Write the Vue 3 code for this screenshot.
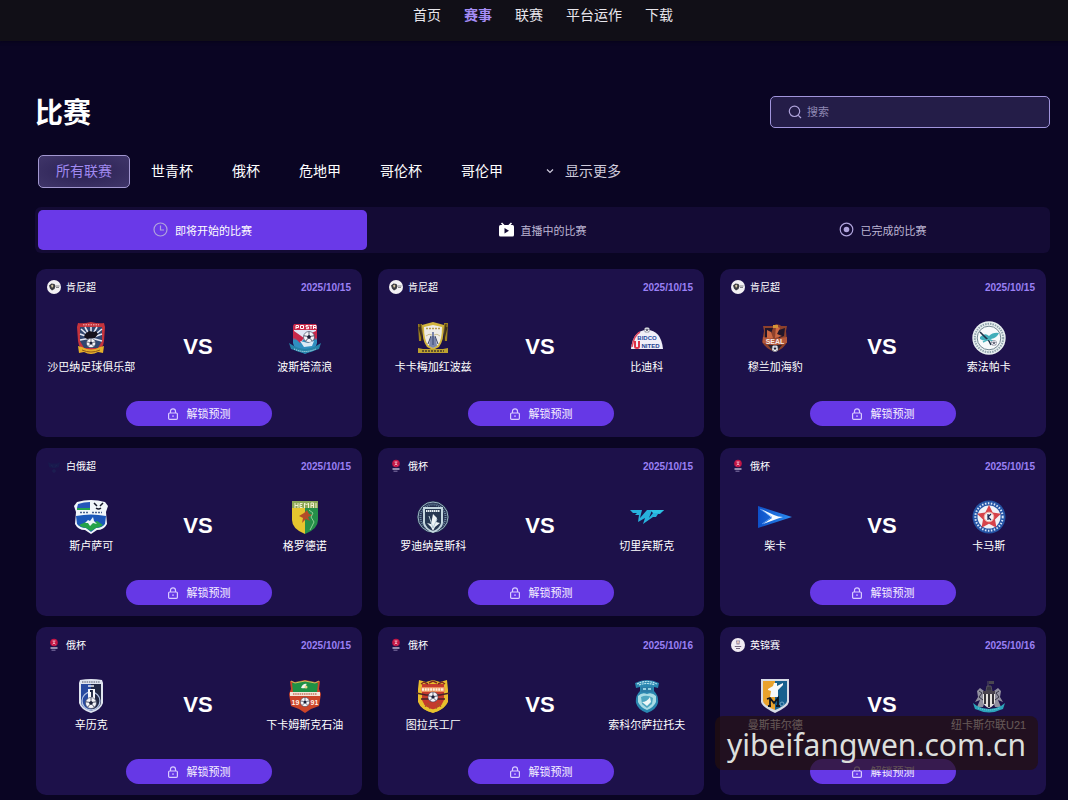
<script setup>
import {ref} from "vue";

const navItems = ["首页", "赛事", "联赛", "平台运作", "下载"];
const activeNav = ref("赛事");

const leagues = ["所有联赛", "世青杯", "俄杯", "危地甲", "哥伦杯", "哥伦甲"];
const activeLeague = ref("所有联赛");

const tabs = [
    {id: "clock", label: "即将开始的比赛"},
    {id: "live", label: "直播中的比赛"},
    {id: "done", label: "已完成的比赛"},
];
const activeTab = ref("clock");
const search = ref("");

const matches = [
    {league: "肯尼超", icon: "lg-kenya", date: "2025/10/15", home: "沙巴纳足球俱乐部", homeLogo: "shabana", away: "波斯塔流浪", awayLogo: "posta"},
    {league: "肯尼超", icon: "lg-kenya", date: "2025/10/15", home: "卡卡梅加红波兹", homeLogo: "kakamega", away: "比迪科", awayLogo: "bidco"},
    {league: "肯尼超", icon: "lg-kenya", date: "2025/10/15", home: "穆兰加海豹", homeLogo: "seal", away: "索法帕卡", awayLogo: "sofapaka"},
    {league: "白俄超", icon: "lg-belarus", date: "2025/10/15", home: "斯卢萨可", homeLogo: "slutsk", away: "格罗德诺", awayLogo: "neman"},
    {league: "俄杯", icon: "lg-russia", date: "2025/10/15", home: "罗迪纳莫斯科", homeLogo: "rodina", away: "切里宾斯克", awayLogo: "chelyabinsk"},
    {league: "俄杯", icon: "lg-russia", date: "2025/10/15", home: "柴卡", homeLogo: "chayka", away: "卡马斯", awayLogo: "kamaz"},
    {league: "俄杯", icon: "lg-russia", date: "2025/10/15", home: "辛历克", homeLogo: "shinnik", away: "下卡姆斯克石油", awayLogo: "neftekhimik"},
    {league: "俄杯", icon: "lg-russia", date: "2025/10/16", home: "图拉兵工厂", homeLogo: "arsenal", away: "索科尔萨拉托夫", awayLogo: "sokol"},
    {league: "英锦赛", icon: "lg-efl", date: "2025/10/16", home: "曼斯菲尔德", homeLogo: "mansfield", away: "纽卡斯尔联U21", awayLogo: "newcastle"},
];
</script>

<template>
    <svg class="sprite" width="0" height="0" aria-hidden="true">
        <defs>
            <linearGradient id="posta-bg" x1="0" y1="0" x2="0" y2="1">
                <stop offset=".45" stop-color="#c8284a"/>
                <stop offset=".55" stop-color="#2f8fc0"/>
            </linearGradient>
            <linearGradient id="chayka-bg" x1="0" y1="0" x2="1" y2="0">
                <stop offset="0" stop-color="#0d50c8"/>
                <stop offset="1" stop-color="#2b8cf0"/>
            </linearGradient>
        </defs>

        <symbol id="ball" viewBox="0 0 10 10">
            <circle cx="5" cy="5" r="4.6" fill="#f4f4f8" stroke="#333a55" stroke-width=".5"/>
            <path d="M5 3.2l1.700 1.200-.6 2H3.900l-.6-2z" fill="#1b2038"/>
            <path d="M5 .6v2.600M9.300 4L6.700 4.400M7.700 8.400L6.100 6.400M2.300 8.400l1.600-2M.7 4l2.600.4" stroke="#1b2038" stroke-width=".6"/>
        </symbol>

        <!-- league badges -->
        <symbol id="lg-kenya" viewBox="0 0 14 14">
            <circle cx="7" cy="7" r="7" fill="#f3f1f4"/>
            <path d="M2 5.500l2.500-2 3 .4 1 2-1 3-2.500 1.600L3 8.500z" fill="#3a3b40"/>
            <path d="M4 5.500l1.500-1 1 1.500-1.500 2z" fill="#d8c9a4"/>
            <path d="M9 6h3.500M9 7.500h3" stroke="#78787e" stroke-width=".9"/>
        </symbol>
        <symbol id="lg-belarus" viewBox="0 0 14 14">
            <path d="M1 3l3 1.500h6L13 3l-1 5-3 1H5L2 8z" fill="#19194d"/>
            <path d="M4 6l2 1.500M10 6L8 7.500M6 11h2v2H6z" stroke="#1c2352" stroke-width="1" fill="none"/>
        </symbol>
        <symbol id="lg-russia" viewBox="0 0 14 14">
            <circle cx="7" cy="4.500" r="3.800" fill="#c31645"/>
            <path d="M5.500 3h3M7 3v3M5.500 6.200L7 5l1.500 1.200" stroke="#f3b8c8" stroke-width=".9" fill="none"/>
            <path d="M3.500 10h7" stroke="#d6cfe4" stroke-width="1.300"/>
            <path d="M4.500 12.200h4" stroke="#8377a8" stroke-width="1"/>
        </symbol>
        <symbol id="lg-efl" viewBox="0 0 14 14">
            <circle cx="7" cy="7" r="7" fill="#f0eaf3"/>
            <path d="M5 2.500h4l-.5 4h-3z" fill="#8d83a5"/>
            <circle cx="7" cy="4.200" r="1.200" fill="#e6c4b5"/>
            <path d="M3.800 8.500h6.400M5 10.500h4" stroke="#71637d" stroke-width="1"/>
        </symbol>

        <!-- team crests -->
        <symbol id="shabana" viewBox="0 0 34 34">
            <path d="M4 2q5 1 13-1 8 2 13 1l1 4-1 14q0 8-13 13Q4 28 4 20L3 6z" fill="#c5333c"/>
            <path d="M6 6h22v14l-4 7H10l-4-7z" fill="#31466f"/>
            <path d="M17 17L7 8M17 17L11 6M17 17V6M17 17l6-11M17 17L28 8M17 17l11-4M17 17L6 13M17 17L6 19M17 17l11 3" stroke="#e4e6f2" stroke-width="1.600"/>
            <path d="M11 13l4-3 5 1 2-1 2 3-3 4-8 1-3-2z" fill="#16121d"/>
            <path d="M4 25l4 1q9 5 18 0l4-1-1 7-5-1q-7 4-14 0l-5 1z" fill="#e4b02a"/>
            <path d="M8 29q9 4 18 0" stroke="#91591a" fill="none"/>
            <path d="M9 3.800h16" stroke="#f3bdc0" stroke-width="1" stroke-dasharray="1.500 1"/>
            <use href="#ball" x="12" y="17" width="10" height="10"/>
        </symbol>
        <symbol id="posta" viewBox="0 0 34 34">
            <path d="M6 3h22l1 2v17q-1 7-12 11Q6 29 5 22V5z" fill="url(#posta-bg)"/>
            <path d="M6 9h22v1l-7 3-8 8-7-9z" fill="#dfe6f4"/>
            <path d="M6 10l10 7-4 5-6-6z" fill="#c8284a"/>
            <path d="M8 8V4.500h2.500v2H8M12.500 4.500h3v3h-3zM20.500 4.500h-2.500v1.500h2.500v1.700h-2.500M21.500 4.500h3M23 4.500V8M25.500 8V4.500H28V8M25.500 6.500H28" stroke="#fff" fill="none"/>
            <use href="#ball" x="15" y="10" width="12" height="12"/>
            <path d="M12 20l8 2 6-2-2 5-8 1z" fill="#dceaf5"/>
            <path d="M1 22l5 3q11 6 22 0l5-3-2 6-3 1q-11 6-22 0l-3-1z" fill="#2583a8"/>
            <path d="M6 28q11 5 22 0" stroke="#d7eef7" stroke-dasharray="1 1" fill="none"/>
        </symbol>
        <symbol id="kakamega" viewBox="0 0 34 34">
            <path d="M2 3h4l-1 17H3zM28 2h4l-1 18h-2z" fill="#a2831e"/>
            <path d="M3 6l3 12M31 6l-3 12M4 3l2 17M30 3l-2 17" stroke="#403316" stroke-width="1.200"/>
            <path d="M6 4l11-3 11 3q0 16-5 22l-6 3-6-3Q6 20 6 4z" fill="#d2b53d"/>
            <path d="M8 6l9-2 9 2q0 13-4 18l-5 3-5-3Q8 19 8 6z" fill="#eeece7"/>
            <path d="M10 7.500h14" stroke="#b59c4c" stroke-width="1.400" stroke-dasharray="2 1"/>
            <path d="M16 11h2v4l2 3 1 7-4 2-4-2 1-7 2-3z" fill="#7b86ac"/>
            <path d="M15 15l-3 8M19 15l3 8M17 15v9" stroke="#39466e" fill="none"/>
            <path d="M10 15q3-3 6-1M24 15q-3-3-6-1" stroke="#cbbf91" fill="none"/>
            <path d="M2 27l5 1h20l5-1v5H2z" fill="#bca02f"/>
            <path d="M6 30h22" stroke="#463a2a" stroke-width="1.300" stroke-dasharray="2 1"/>
        </symbol>
        <symbol id="bidco" viewBox="0 0 34 34">
            <path d="M1 28Q3 9 17 9t16 19z" fill="#f0eff8"/>
            <path d="M2 26Q4 14 10 11" stroke="#de4760" stroke-width="1.500" fill="none"/>
            <text x="17" y="19" class="crest-text" fill="#274aa2" font-size="6" text-anchor="middle">BIDCO</text>
            <path d="M5 20v5.500q0 1.500 2 1.500t2-1.500V20" fill="none" stroke="#dc3146" stroke-width="2"/>
            <text x="20.500" y="27" class="crest-text" fill="#243f92" font-size="6" text-anchor="middle">NITED</text>
            <use href="#ball" x="14" y="6" width="6" height="6"/>
        </symbol>
        <symbol id="seal" viewBox="0 0 34 34">
            <path d="M5 5h11l2-2 4 1 1 1h6l-1 5 1 11q-3 7-12 10Q8 28 4 21l2-11z" fill="#8d412c"/>
            <path d="M7 7h8l-3 8-5 2zM18 10l9-3-1 8-5 2z" fill="#21162a"/>
            <path d="M9 9l4 2 2 6-6 1zM18 5l4 2-3 6 5 2-7 2z" fill="#cc6843"/>
            <path d="M15 4h5v3h-5z" fill="#d49437"/>
            <path d="M5 16l12 2 12-2v6l-12 2-12-2z" fill="#b4583b"/>
            <text x="17" y="22.500" class="crest-text" fill="#f4eae9" font-size="7" text-anchor="middle">SEAL</text>
            <path d="M10 24l14 0-4 5-3 2-3-2z" fill="#29202d"/>
            <use href="#ball" x="13.500" y="24" width="7" height="7"/>
        </symbol>
        <symbol id="sofapaka" viewBox="0 0 34 34">
            <circle cx="17" cy="17" r="16.700" fill="#e9f0f1"/>
            <circle cx="17" cy="17" r="14.200" fill="none" stroke="#8fa3ac" stroke-width="2" stroke-dasharray="1.500 1"/>
            <circle cx="17" cy="17" r="11.800" fill="#f7fafb" stroke="#536b78" stroke-width=".8"/>
            <path d="M8 16q5-5 9-1 4-4 10-3-2 5-8 6-6 3-11 0z" fill="#41aeba"/>
            <path d="M8 11l9 9 2 4" stroke="#203248" stroke-width="1.500" fill="none"/>
            <path d="M11 21l6-3 5 3" stroke="#4fb7c0" stroke-width="1.500" fill="none"/>
            <use href="#ball" x="19" y="19" width="6" height="6"/>
        </symbol>
        <symbol id="slutsk" viewBox="0 0 34 34">
            <path d="M3 2q14-4 28 0l3 4-2 6 1 12q-3 6-10 6l-6 4-6-4q-7 0-10-6l1-12-2-6z" fill="#f2f7fa"/>
            <path d="M4 4q6-2 12-2v6H3z" fill="#2656b8"/>
            <path d="M3 8h13v2H3z" fill="#25a44e"/>
            <path d="M20 3l3 3M29 3l-3 3M22 8q2.500 2 5 0" stroke="#171b2a" stroke-width="1.500" fill="none"/>
            <path d="M6 12.500h9M18 12.500h10" stroke="#48618f" stroke-width="1.500" stroke-dasharray="2 1"/>
            <path d="M2 16q15-3 30 0l-1 8q-3 4-9 4l-5 4-5-4q-6 0-9-4z" fill="#1c58b9"/>
            <path d="M5 25l7-3 5 2 6-3 6 4q-3 3-7 3l-5 3-5-3q-4 0-7-3z" fill="#24a349"/>
            <path d="M11 23l3-3 2 1 3-4 1 4 3 3-4-1-3 3-2-3z" fill="#edf5f9"/>
        </symbol>
        <symbol id="neman" viewBox="0 0 34 34">
            <path d="M4 1h13v33Q4 29 4 20z" fill="#e6c52e"/>
            <path d="M17 1h13v19q0 9-13 14z" fill="#258f49"/>
            <path d="M4 1h26v7H4z" fill="#8ca856"/>
            <path d="M7 3v5M10 3v5M7 5.500h3M14.500 3.500H12v4h2.500M12 5.500h2M16.500 8V3l2 2 2-2v5M23 8V3h2.500v5M23 5.500h2.500M28 3v5" stroke="#f1efd0" fill="none"/>
            <path d="M11 16l5-3 3-3 2 4 4 1-5 2 2 4-4-2-4 4 1-5z" fill="#b44c29"/>
            <path d="M21 10l4 3-2 4 3 5-4 8" stroke="#8ed196" stroke-width="1" fill="none"/>
        </symbol>
        <symbol id="rodina" viewBox="0 0 34 34">
            <circle cx="17" cy="17" r="16" fill="#253150"/>
            <circle cx="17" cy="17" r="15" fill="none" stroke="#9bb5c4" stroke-width="1"/>
            <circle cx="17" cy="17" r="12.500" fill="none" stroke="#708da5" stroke-width="2" stroke-dasharray="1 1"/>
            <path d="M7 7h20v16q-1 6-10 10Q8 29 7 23z" fill="#c4d7df"/>
            <path d="M9 9h16v14q-1 5-8 8-7-3-8-8z" fill="#263852"/>
            <path d="M10 11h14" stroke="#e4eef2" stroke-width="2" stroke-dasharray="1.500 .5"/>
            <path d="M17 14l4 4-1 4 4 1-5 4-2 4-2-4-4-4 4 1z" fill="#edf4f6"/>
            <path d="M13 16l4 12 4-9" stroke="#b6cbd6" fill="none"/>
        </symbol>
        <symbol id="chelyabinsk" viewBox="0 0 34 34">
            <path d="M0 10h12l-2 8 7-8h5l-3 8 4-5h4l2-3h5l-4 4h-2l-2 3h-3l-10 7 2-6-7 4 1-7H5l2-2H3z" fill="#27b1dc"/>
            <path d="M20 10h14l-4 3h-7z" fill="#2fc4e3"/>
        </symbol>
        <symbol id="chayka" viewBox="0 0 34 34">
            <path d="M0 6l34 11L0 28z" fill="url(#chayka-bg)"/>
            <path d="M3 9l13 6q4 2 9 2-4 1-9 3L5 24l9-6z" fill="#f5fbff"/>
            <path d="M2 9l12 8-10 7" stroke="#70afff" stroke-width=".7" fill="none"/>
        </symbol>
        <symbol id="kamaz" viewBox="0 0 34 34">
            <circle cx="17" cy="17" r="16.500" fill="#2454a5"/>
            <circle cx="17" cy="17" r="13.700" fill="none" stroke="#d6e5f8" stroke-width="2" stroke-dasharray="1.500 1.500"/>
            <circle cx="17" cy="17" r="11.500" fill="#f0f2f7"/>
            <path d="M17 5l3.700 7.500 8.300 1.200-6 5.800 1.500 8.300-7.500-4-7.500 4 1.500-8.300-6-5.800 8.300-1.200z" fill="#d6434a"/>
            <circle cx="17" cy="17" r="4.800" fill="#f4f4f7" stroke="#f2b5a9"/>
            <path d="M16 14v6M19 14l-3 3 3 3" stroke="#172451" stroke-width="1.200" fill="none"/>
        </symbol>
        <symbol id="shinnik" viewBox="0 0 34 34">
            <path d="M6 1q11-2 22 0l1 3v20q-2 7-12 10Q7 31 5 24V4z" fill="#dfe4ef"/>
            <path d="M7 5h10v27Q7 29 7 23z" fill="#284a9f"/>
            <path d="M17 5h10v18q0 6-10 9z" fill="#222844"/>
            <path d="M8 3h18" stroke="#4a5165" stroke-dasharray="1.500 .8"/>
            <path d="M14 7h6" stroke="#e8edf6" stroke-width="1.500"/>
            <circle cx="17" cy="22" r="9" fill="none" stroke="#b2c2e4" stroke-width="1.300"/>
            <path d="M14 10h7v11h-7z" fill="#f5f6fa"/>
            <path d="M16 12h2v6" fill="none" stroke="#17203b" stroke-width="1.800"/>
            <use href="#ball" x="11" y="18" width="12" height="12"/>
        </symbol>
        <symbol id="neftekhimik" viewBox="0 0 34 34">
            <path d="M2 2l5 1 10-2 10 2 5-1-1 8 2 5-2 12-8 3-6 4-6-4-8-3L1 15l2-5z" fill="#cc4529"/>
            <path d="M4 4q13-4 26 0l-1 9H5z" fill="#1e9145"/>
            <path d="M3 2l4 2 10-2 10 2 4-2" stroke="#d6b757" stroke-width="1" fill="none"/>
            <path d="M13 9q2-5 6-4-2 1-1 2 2 3-5 2z" fill="#f2f2ed"/>
            <circle cx="18" cy="8" r="1.500" fill="#ead68a"/>
            <path d="M2 13h30v4H2z" fill="#f4e5d8"/>
            <path d="M5 15h24" stroke="#c57462" stroke-width="1.500" stroke-dasharray="1.500 .7"/>
            <text x="7.500" y="26" class="crest-text" fill="#fff0e8" font-size="7" text-anchor="middle">19</text>
            <text x="26.500" y="26" class="crest-text" fill="#fff0e8" font-size="7" text-anchor="middle">91</text>
            <use href="#ball" x="12" y="18" width="10" height="10"/>
        </symbol>
        <symbol id="arsenal" viewBox="0 0 34 34">
            <path d="M3 1l7 2 7-2 7 2 7-2 1 10v12q-3 7-15 11Q5 31 2 23V10z" fill="#e9bc2d"/>
            <path d="M6 5h22v16l-3 6-8 4-8-4-3-6z" fill="#c53b2d"/>
            <path d="M5 5l3-2 4 2M13 4l4-2 4 2M22 5l4-2 3 2" stroke="#7d2b20" stroke-width="1.500" fill="none"/>
            <path d="M5 8h24v5H5z" fill="#eb905e"/>
            <path d="M6 10.500h22" stroke="#fff1db" stroke-width="2.500" stroke-dasharray="2 .7"/>
            <path d="M0 14l10 2h14l10-2M5 20h24" stroke="#452329" stroke-width="1.300" fill="none"/>
            <path d="M5 24q3 6 12 8 9-2 12-8" stroke="#e7c32d" stroke-width="3" fill="none"/>
            <path d="M9 28l3-4 2 6M20 30l2-6 3 4" stroke="#a75327" fill="none"/>
            <use href="#ball" x="11.500" y="12.500" width="11" height="11"/>
        </symbol>
        <symbol id="sokol" viewBox="0 0 34 34">
            <path d="M5 4q12-6 24 0l-1 5-4-1v4q5 5 4 12-2 7-11 10Q8 31 6 24q-1-7 4-12V8L6 9z" fill="#2a87b0"/>
            <path d="M7 5q10-5 20 0M9 6q8-3 16 0" stroke="#b7e3ed" stroke-width="1.200" fill="none" stroke-dasharray="2 .7"/>
            <path d="M11 8h12v5H11z" fill="#2b7ca6"/>
            <path d="M13 10h3M18 10h3" stroke="#94cfe0" stroke-width="2"/>
            <path d="M8 17q4-4 9-2 5-2 9 2v6q-2 5-9 8-7-3-9-8z" fill="#a8dce5"/>
            <path d="M11 18q6-3 12 1l-1 6-5 4-5-4z" fill="#4da6c0"/>
            <path d="M12 23q5 0 8-5l1 5-4 4z" fill="#edf7f7"/>
        </symbol>
        <symbol id="mansfield" viewBox="0 0 34 34">
            <path d="M3 0h28v23q-1 5-14 11Q4 28 3 23z" fill="#d8dce6"/>
            <path d="M5 2h12v29Q5 26 5 22z" fill="#e9a22d"/>
            <path d="M17 2h12v20q0 4-12 9z" fill="#17608f"/>
            <path d="M10 10l5-3 1-3h3v3l6-3v2l-5 5v7h-8l1-6-3-1z" fill="#f7f8fa"/>
            <path d="M12 27v-8M9 20l3-1 4 5 4-5v8M10 27h3M18 27h4" fill="none" stroke="#111722" stroke-width="1.800"/>
            <circle cx="24" cy="25" r="2" fill="none" stroke="#70a4c4"/>
        </symbol>
        <symbol id="newcastle" viewBox="0 0 34 34">
            <path d="M14 12h6l-1-5h-4zM16 2v6" fill="#363541" stroke="#55515c"/>
            <path d="M17 2h5v3h-5z" fill="#494650"/>
            <path d="M5 12l3-3 4 3-1 5 2 5-2 6H5l3-7-5 2 3-5zM29 12l-3-3-4 3 1 5-2 5 2 6h6l-3-7 5 2-3-5z" fill="#92909f"/>
            <path d="M7 12l3 2-3 4 4 3M27 12l-3 2 3 4-4 3" stroke="#373544" fill="none"/>
            <path d="M11 12h12v11q-1 4-6 6-5-2-6-6z" fill="#e6e2de"/>
            <path d="M13 14v11M17 14v14M21 14v11" stroke="#17151d" stroke-width="1.700"/>
            <path d="M11 12h12v3H11z" fill="#4a434d"/>
            <path d="M1 24l4 3q12 6 24 0l4-3-2 6-3 1q-11 5-22 0l-3-1z" fill="#2ca5bb"/>
            <path d="M6 29q11 4 22 0" stroke="#7fd0da" fill="none" stroke-dasharray="1 1"/>
        </symbol>
    </svg>

    <header class="header">
        <nav class="nav">
            <a v-for="item in navItems" :key="item" href="#" :class="{active: item === activeNav}"
               @click.prevent="activeNav = item">{{ item }}</a>
        </nav>
    </header>

    <main class="page">
        <div class="title_row">
            <h1>比赛</h1>
            <label class="search_box">
                <svg viewBox="0 0 14 14" width="14" height="14" aria-hidden="true">
                    <circle cx="6.500" cy="6.300" r="5.200"/>
                    <path d="M10.300 10.300l2.700 2.700"/>
                </svg>
                <input v-model="search" type="text" placeholder="搜索" aria-label="搜索">
            </label>
        </div>

        <div class="filters">
            <button v-for="league in leagues" :key="league" type="button" class="filter_btn"
                    :class="{active: league === activeLeague}" @click="activeLeague = league">{{ league }}</button>
            <button type="button" class="filter_btn more_btn">
                <svg viewBox="0 0 10 10" width="10" height="10" aria-hidden="true"><path d="M2 3.500l3 3 3-3"/></svg>
                显示更多
            </button>
        </div>

        <div class="tabs" role="tablist">
            <button v-for="tab in tabs" :key="tab.id" type="button" role="tab" class="tab_btn"
                    :class="{active: tab.id === activeTab}" :aria-selected="tab.id === activeTab"
                    @click="activeTab = tab.id">
                <svg v-if="tab.id === 'clock'" class="line_icon" viewBox="0 0 15 15" width="15" height="15" aria-hidden="true">
                    <circle cx="7.500" cy="7.500" r="6.500"/>
                    <path d="M7.500 3.500v4.500h3.500"/>
                </svg>
                <svg v-else-if="tab.id === 'live'" viewBox="0 0 15 15" width="15" height="15" aria-hidden="true">
                    <path d="M2.500 1l3 3M12.500 1l-3 3" stroke="#fff" stroke-width="1.600"/>
                    <rect x="0" y="3" width="15" height="11.500" rx="1.500" fill="#fff"/>
                    <path d="M5.500 6l4.500 2.700-4.500 2.800z" fill="#150c35"/>
                </svg>
                <svg v-else class="line_icon" viewBox="0 0 15 15" width="15" height="15" aria-hidden="true">
                    <circle cx="7.500" cy="7.500" r="6.300"/>
                    <circle cx="7.500" cy="7.500" r="2.800" class="dot"/>
                </svg>
                {{ tab.label }}
            </button>
        </div>

        <section class="matches">
            <article v-for="(match, i) in matches" :key="i" class="card">
                <div class="card_head">
                    <svg width="14" height="14" aria-hidden="true"><use :href="'#' + match.icon"/></svg>
                    <span>{{ match.league }}</span>
                    <time>{{ match.date }}</time>
                </div>
                <div class="teams">
                    <div class="team">
                        <svg width="34" height="34" aria-hidden="true"><use :href="'#' + match.homeLogo"/></svg>
                        <span>{{ match.home }}</span>
                    </div>
                    <div class="vs">VS</div>
                    <div class="team">
                        <svg width="34" height="34" aria-hidden="true"><use :href="'#' + match.awayLogo"/></svg>
                        <span>{{ match.away }}</span>
                    </div>
                </div>
                <button type="button" class="unlock_btn">
                    <svg viewBox="0 0 10 12" width="10" height="12" aria-hidden="true">
                        <path d="M2.500 5V3.300a2.500 2.500 0 0 1 5 0V5"/>
                        <rect x=".6" y="5" width="8.800" height="6.300" rx="1"/>
                        <path d="M5 7.300v1.800"/>
                    </svg>
                    <span>解锁预测</span>
                </button>
            </article>
        </section>
    </main>

    <div class="watermark">yibeifangwen.com.cn</div>
</template>

<style>
    body {
        background: #0a0523;
    }

    #app {
        position: relative;
        font-family: "Liberation Sans", "Noto Sans CJK SC", sans-serif;
        color: #fff;
    }
</style>

<style scoped>
    * {
        box-sizing: border-box;
    }

    button {
        border: none;
        background: none;
        padding: 0;
        font-family: inherit;
        color: inherit;
        cursor: pointer;
    }

    .sprite {
        position: absolute;
    }

    .crest-text {
        font-family: "Liberation Sans", sans-serif;
        font-weight: bold;
    }

    .header {
        height: 41px;
        padding: 5px 18px 0 36px;
        background: #110f17;
        box-shadow: 0 1px 3px #07031a;
    }

    .nav {
        display: flex;
        justify-content: center;
        gap: 23px;
        font-size: 14px;
        line-height: 20px;
    }

    .nav a {
        color: #e8e6ec;
        text-decoration: none;
    }

    .nav a.active {
        color: #a58cf5;
        font-weight: bold;
    }

    .page {
        padding: 55px 18px 5px 35px;
    }

    .title_row {
        display: flex;
        justify-content: space-between;
        align-items: center;
        height: 32px;
    }

    h1 {
        margin: 0;
        padding-top: 4px;
        font-size: 28px;
        line-height: 32px;
    }

    .search_box {
        display: flex;
        align-items: center;
        gap: 5px;
        width: 280px;
        height: 32px;
        padding: 0 17px;
        border: 1px solid #a195dc;
        border-radius: 5px;
        background: #241d48;
    }

    .search_box svg,
    .more_btn svg,
    .line_icon,
    .unlock_btn svg {
        fill: none;
        stroke: #b0a4dc;
        stroke-width: 1.2;
    }

    .search_box input {
        flex: 1;
        min-width: 0;
        padding: 0;
        border: none;
        outline: none;
        background: none;
        font-family: inherit;
        font-size: 11px;
        color: #fff;
    }

    .search_box input::placeholder {
        color: #8f88b3;
        opacity: 1;
    }

    .filters {
        display: flex;
        flex-wrap: wrap;
        gap: 3px;
        margin-top: 27px;
        padding-left: 3px;
    }

    .filter_btn {
        height: 33px;
        padding: 0 17px 2px;
        border: 1px solid transparent;
        border-radius: 5px;
        font-size: 14px;
        line-height: 20px;
    }

    .filter_btn.active {
        border-color: #a297d0;
        background: radial-gradient(#2a2052, #40366a);
        color: #a18af0;
    }

    .more_btn {
        display: flex;
        align-items: center;
        gap: 10px;
        padding: 0 20px 2px;
        color: #cfcbdc;
    }

    .more_btn svg {
        stroke: #cfcbdc;
    }

    .tabs {
        display: grid;
        grid-template-columns: repeat(3, 1fr);
        gap: 11px;
        margin-top: 19px;
        padding: 3px;
        border-radius: 6px;
        background: #140b35;
    }

    .tab_btn {
        display: flex;
        justify-content: center;
        align-items: center;
        gap: 7px;
        height: 40px;
        padding-bottom: 1px;
        border-radius: 5px;
        font-size: 11px;
        color: #bdb6d3;
    }

    .tab_btn.active {
        background: #6a39e8;
        color: #fff;
    }

    .line_icon .dot {
        fill: #b0a4dc;
        stroke: none;
    }

    .matches {
        display: grid;
        grid-template-columns: repeat(3, 1fr);
        gap: 11px 16px;
        margin-top: 16px;
        padding: 0 4px 0 1px;
    }

    .card {
        padding: 10px 0 11px;
        border-radius: 10px;
        background: #1d114a;
    }

    .card_head {
        display: flex;
        align-items: center;
        gap: 5px;
        height: 16px;
        padding: 0 11px;
        font-size: 10px;
    }

    .card_head span {
        padding-bottom: 2px;
    }

    .card_head time {
        margin-left: auto;
        color: #9a80f5;
        font-weight: bold;
    }

    .teams {
        display: grid;
        grid-template-columns: repeat(3, 1fr);
        align-items: center;
        margin: 26px 0;
        padding: 0 4px 0 2px;
    }

    .team {
        display: flex;
        flex-direction: column;
        align-items: center;
        gap: 4px;
        font-size: 11px;
        line-height: 16px;
        white-space: nowrap;
    }

    .vs {
        padding-bottom: 2px;
        font-size: 22px;
        line-height: 24px;
        font-weight: bold;
        text-align: center;
    }

    .unlock_btn {
        display: flex;
        justify-content: center;
        align-items: center;
        gap: 9px;
        width: 45%;
        height: 25px;
        margin: 0 auto;
        border-radius: 13px;
        background: #6638e6;
        font-size: 11px;
        color: #f6f1ff;
    }

    .unlock_btn span {
        padding-bottom: 2px;
    }

    .unlock_btn svg {
        stroke: #d9cbff;
    }

    .watermark {
        position: absolute;
        right: 30px;
        bottom: 30px;
        padding: 4px 12px 0;
        border-radius: 8px;
        background: rgba(36, 15, 14, .7);
        font-family: "Noto Sans", sans-serif;
        font-size: 30px;
        line-height: 50px;
        color: #dcdfdc;
    }
</style>
